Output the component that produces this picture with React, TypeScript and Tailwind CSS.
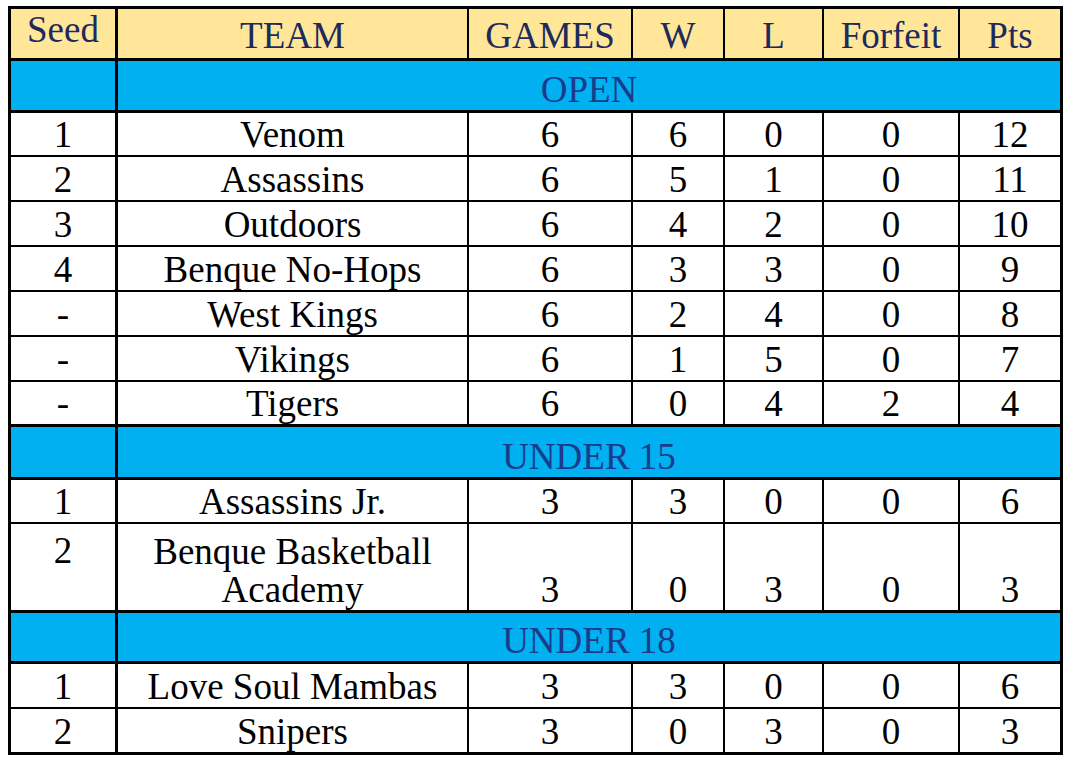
type Row = {
  seed: string;
  team: string[];
  games: number;
  w: number;
  l: number;
  forfeit: number;
  pts: number;
  h: string;
  thick?: boolean;
};

type Section = { title: string; h: string; rows: Row[] };

const sections: Section[] = [
  {
    title: "OPEN",
    h: "h-[52px]",
    rows: [
      { seed: "1", team: ["Venom"], games: 6, w: 6, l: 0, forfeit: 0, pts: 12, h: "h-[44px]" },
      { seed: "2", team: ["Assassins"], games: 6, w: 5, l: 1, forfeit: 0, pts: 11, h: "h-[45px]" },
      { seed: "3", team: ["Outdoors"], games: 6, w: 4, l: 2, forfeit: 0, pts: 10, h: "h-[45px]" },
      { seed: "4", team: ["Benque No-Hops"], games: 6, w: 3, l: 3, forfeit: 0, pts: 9, h: "h-[45px]" },
      { seed: "-", team: ["West Kings"], games: 6, w: 2, l: 4, forfeit: 0, pts: 8, h: "h-[45px]" },
      { seed: "-", team: ["Vikings"], games: 6, w: 1, l: 5, forfeit: 0, pts: 7, h: "h-[45px]" },
      { seed: "-", team: ["Tigers"], games: 6, w: 0, l: 4, forfeit: 2, pts: 4, h: "h-[45px]", thick: true },
    ],
  },
  {
    title: "UNDER 15",
    h: "h-[53px]",
    rows: [
      { seed: "1", team: ["Assassins Jr."], games: 3, w: 3, l: 0, forfeit: 0, pts: 6, h: "h-[44px]" },
      {
        seed: "2",
        team: ["Benque Basketball", "Academy"],
        games: 3,
        w: 0,
        l: 3,
        forfeit: 0,
        pts: 3,
        h: "h-[89px]",
        thick: true,
      },
    ],
  },
  {
    title: "UNDER 18",
    h: "h-[51px]",
    rows: [
      { seed: "1", team: ["Love Soul Mambas"], games: 3, w: 3, l: 0, forfeit: 0, pts: 6, h: "h-[45px]" },
      { seed: "2", team: ["Snipers"], games: 3, w: 0, l: 3, forfeit: 0, pts: 3, h: "h-[43px]" },
    ],
  },
];

const cell = "flex items-end justify-center pb-[1px] leading-[38px]";

function StandingRow({ row, last }: { row: Row; last: boolean }) {
  const multi = row.team.length > 1;
  return (
    <div
      className={`flex ${row.h} ${last ? "" : row.thick ? "border-b-[3px] border-black" : "border-b-2 border-black"}`}
    >
      <div
        className={`w-[107px] border-r-[3px] border-black flex justify-center ${
          multi ? "items-start pt-[8px] leading-[38px]" : "items-end pb-[1px] leading-[38px]"
        }`}
      >
        {row.seed}
      </div>
      <div className="w-[351px] border-r-2 border-black flex flex-col items-center justify-end pb-[1px] leading-[38px]">
        {row.team.map((t) => (
          <span key={t}>{t}</span>
        ))}
      </div>
      <div className={`w-[164px] border-r-2 border-black ${cell}`}>{row.games}</div>
      <div className={`w-[92px] border-r-2 border-black ${cell}`}>{row.w}</div>
      <div className={`w-[99px] border-r-2 border-black ${cell}`}>{row.l}</div>
      <div className={`w-[136px] border-r-2 border-black ${cell}`}>{row.forfeit}</div>
      <div className={`w-[100px] ${cell}`}>{row.pts}</div>
    </div>
  );
}

export default function App() {
  return (
    <div className="min-h-[759px] w-[1068px] bg-white pt-[6px] pl-[8px] text-[37px] text-black font-['Liberation_Serif','Times_New_Roman',serif]">
      <div className="w-[1055px] border-[3px] border-black">
        {/* header */}
        <div className="flex h-[52px] border-b-[3px] border-black bg-[#ffe699] text-[#1c2a5c]">
          <div className="w-[107px] border-r-[3px] border-black flex items-start justify-center pt-[2px] leading-[38px]">
            Seed
          </div>
          <div className={`w-[351px] border-r-2 border-black ${cell} pb-[3px]`}>TEAM</div>
          <div className={`w-[164px] border-r-2 border-black ${cell} pb-[3px]`}>GAMES</div>
          <div className={`w-[92px] border-r-2 border-black ${cell} pb-[3px]`}>W</div>
          <div className={`w-[99px] border-r-2 border-black ${cell} pb-[3px]`}>L</div>
          <div className={`w-[136px] border-r-2 border-black ${cell} pb-[3px]`}>Forfeit</div>
          <div className={`w-[100px] ${cell} pb-[3px]`}>Pts</div>
        </div>
        {sections.map((s, si) => (
          <div key={s.title}>
            <div className={`flex ${s.h} border-b-[3px] border-black bg-[#00b0f0] text-[#1b3b8c]`}>
              <div className="w-[107px] border-r-[3px] border-black" />
              <div className={`flex-1 ${cell}`}>{s.title}</div>
            </div>
            {s.rows.map((r, ri) => (
              <StandingRow
                key={r.team.join(" ")}
                row={r}
                last={si === sections.length - 1 && ri === s.rows.length - 1}
              />
            ))}
          </div>
        ))}
      </div>
    </div>
  );
}
